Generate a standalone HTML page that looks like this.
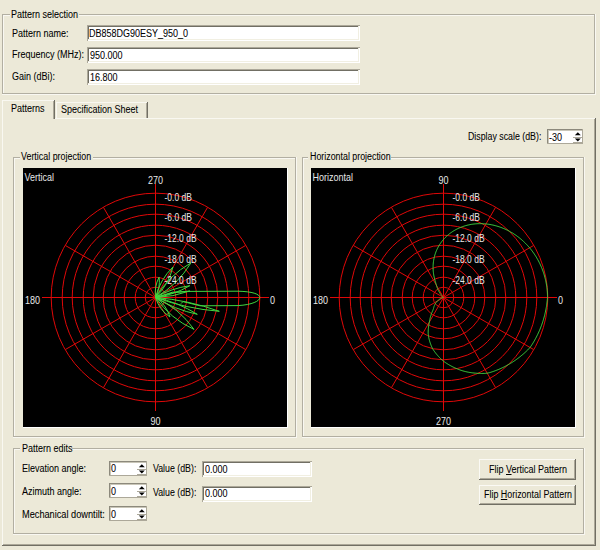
<!DOCTYPE html>
<html><head><meta charset="utf-8"><style>
html,body{margin:0;padding:0;}
body{width:600px;height:550px;overflow:hidden;background:#ECE9D8;position:relative;font-family:"Liberation Sans",sans-serif;}
body>div{position:absolute;}
.t{white-space:nowrap;line-height:11px;height:11px;transform:scaleX(0.9);transform-origin:0 0;-webkit-text-stroke:0.06px #000;}
u{text-decoration:underline;text-underline-offset:1px;}
svg text{font-family:"Liberation Sans",sans-serif;}
</style></head><body>
<div style="left:2px;top:14px;width:592px;height:1px;background:#B2AFA2"></div>
<div style="left:3px;top:15px;width:591px;height:1px;background:#F9F8F2"></div>
<div style="left:2px;top:14px;width:1px;height:79px;background:#B2AFA2"></div>
<div style="left:3px;top:15px;width:1px;height:78px;background:#F9F8F2"></div>
<div style="left:594px;top:14px;width:1px;height:80px;background:#B2AFA2"></div>
<div style="left:595px;top:14px;width:1px;height:81px;background:#F9F8F2"></div>
<div style="left:2px;top:93px;width:593px;height:1px;background:#B2AFA2"></div>
<div style="left:2px;top:94px;width:594px;height:1px;background:#F9F8F2"></div>
<div style="left:9.5px;top:13px;width:69px;height:3px;background:#ECE9D8"></div>
<div class="t" style="left:11.0px;top:8.7px;color:#000;font-size:10px;">Pattern selection</div>
<div class="t" style="left:11.5px;top:27.5px;color:#000;font-size:10px;">Pattern name:</div>
<div class="t" style="left:11.5px;top:49.0px;color:#000;font-size:10px;">Frequency (MHz):</div>
<div class="t" style="left:11.5px;top:71.0px;color:#000;font-size:10px;">Gain (dBi):</div>
<div style="left:87px;top:25px;width:273px;height:16px;background:#fff"></div>
<div style="left:87px;top:25px;width:273px;height:1px;background:#ACA899"></div>
<div style="left:87px;top:25px;width:1px;height:16px;background:#ACA899"></div>
<div style="left:88px;top:26px;width:271px;height:1px;background:#716F64"></div>
<div style="left:88px;top:26px;width:1px;height:14px;background:#716F64"></div>
<div style="left:88px;top:39px;width:271px;height:1px;background:#F1EFE2"></div>
<div style="left:358px;top:26px;width:1px;height:14px;background:#F1EFE2"></div>
<div class="t" style="left:89.0px;top:28.0px;color:#000;font-size:10px;">DB858DG90ESY_950_0</div>
<div style="left:87px;top:47px;width:273px;height:16px;background:#fff"></div>
<div style="left:87px;top:47px;width:273px;height:1px;background:#ACA899"></div>
<div style="left:87px;top:47px;width:1px;height:16px;background:#ACA899"></div>
<div style="left:88px;top:48px;width:271px;height:1px;background:#716F64"></div>
<div style="left:88px;top:48px;width:1px;height:14px;background:#716F64"></div>
<div style="left:88px;top:61px;width:271px;height:1px;background:#F1EFE2"></div>
<div style="left:358px;top:48px;width:1px;height:14px;background:#F1EFE2"></div>
<div class="t" style="left:89.5px;top:50.0px;color:#000;font-size:10px;">950.000</div>
<div style="left:87px;top:69px;width:273px;height:16px;background:#fff"></div>
<div style="left:87px;top:69px;width:273px;height:1px;background:#ACA899"></div>
<div style="left:87px;top:69px;width:1px;height:16px;background:#ACA899"></div>
<div style="left:88px;top:70px;width:271px;height:1px;background:#716F64"></div>
<div style="left:88px;top:70px;width:1px;height:14px;background:#716F64"></div>
<div style="left:88px;top:83px;width:271px;height:1px;background:#F1EFE2"></div>
<div style="left:358px;top:70px;width:1px;height:14px;background:#F1EFE2"></div>
<div class="t" style="left:89.5px;top:72.0px;color:#000;font-size:10px;">16.800</div>
<div style="left:2px;top:118px;width:594px;height:1px;background:#F9F8F1"></div>
<div style="left:2px;top:118px;width:1px;height:428px;background:#F9F8F1"></div>
<div style="left:594px;top:119px;width:1px;height:426px;background:#ACA899"></div>
<div style="left:595px;top:118px;width:1px;height:428px;background:#716F64"></div>
<div style="left:3px;top:544px;width:592px;height:1px;background:#ACA899"></div>
<div style="left:2px;top:545px;width:594px;height:1px;background:#716F64"></div>
<div style="left:56px;top:102px;width:1px;height:16px;background:#F9F8F1"></div>
<div style="left:56px;top:102px;width:91px;height:1px;background:#F9F8F1"></div>
<div style="left:146px;top:103px;width:1px;height:15px;background:#ACA899"></div>
<div style="left:147px;top:102px;width:1px;height:16px;background:#716F64"></div>
<div class="t" style="left:60.5px;top:103.5px;color:#000;font-size:10px;">Specification Sheet</div>
<div style="left:2px;top:100px;width:53px;height:20px;background:#ECE9D8"></div>
<div style="left:2px;top:100px;width:52px;height:1px;background:#F9F8F1"></div>
<div style="left:2px;top:100px;width:1px;height:22px;background:#F9F8F1"></div>
<div style="left:53px;top:101px;width:1px;height:18px;background:#ACA899"></div>
<div style="left:54px;top:100px;width:1px;height:19px;background:#716F64"></div>
<div class="t" style="left:10.5px;top:102.5px;color:#000;font-size:10px;">Patterns</div>
<div class="t" style="left:468.0px;top:131.0px;color:#000;font-size:10px;transform:scaleX(0.88);">Display scale (dB):</div>
<div style="left:547px;top:129px;width:36px;height:15px;background:#fff"></div>
<div style="left:547px;top:129px;width:36px;height:1px;background:#8C897C"></div>
<div style="left:547px;top:129px;width:1px;height:15px;background:#8C897C"></div>
<div style="left:548px;top:130px;width:34px;height:1px;background:#C9C6B8"></div>
<div style="left:548px;top:130px;width:1px;height:13px;background:#C9C6B8"></div>
<div style="left:582px;top:129px;width:1px;height:15px;background:#ACA899"></div>
<div style="left:547px;top:143px;width:36px;height:1px;background:#ACA899"></div>
<div class="t" style="left:549.0px;top:131.5px;color:#000;font-size:10px;">-30</div>
<div style="left:573px;top:137px;width:9px;height:1px;background:#ACA899"></div>
<div style="left:573px;top:142px;width:9px;height:1px;background:#ACA899"></div>
<svg style="position:absolute;left:573px;top:129px" width="10" height="15"><path d="M1.80 6.3 L7.80 6.3 L4.80 3.3 Z" fill="#000"/><path d="M1.80 9.6 L7.80 9.6 L4.80 12.6 Z" fill="#000"/></svg>
<div style="left:13px;top:157px;width:282px;height:1px;background:#B2AFA2"></div>
<div style="left:14px;top:158px;width:281px;height:1px;background:#F9F8F2"></div>
<div style="left:13px;top:157px;width:1px;height:279px;background:#B2AFA2"></div>
<div style="left:14px;top:158px;width:1px;height:278px;background:#F9F8F2"></div>
<div style="left:295px;top:157px;width:1px;height:280px;background:#B2AFA2"></div>
<div style="left:296px;top:157px;width:1px;height:281px;background:#F9F8F2"></div>
<div style="left:13px;top:436px;width:283px;height:1px;background:#B2AFA2"></div>
<div style="left:13px;top:437px;width:284px;height:1px;background:#F9F8F2"></div>
<div style="left:19.5px;top:156px;width:73px;height:3px;background:#ECE9D8"></div>
<div class="t" style="left:21.0px;top:150.8px;color:#000;font-size:10px;transform:scaleX(0.89);">Vertical projection</div>
<div style="left:302px;top:157px;width:281px;height:1px;background:#B2AFA2"></div>
<div style="left:303px;top:158px;width:280px;height:1px;background:#F9F8F2"></div>
<div style="left:302px;top:157px;width:1px;height:279px;background:#B2AFA2"></div>
<div style="left:303px;top:158px;width:1px;height:278px;background:#F9F8F2"></div>
<div style="left:583px;top:157px;width:1px;height:280px;background:#B2AFA2"></div>
<div style="left:584px;top:157px;width:1px;height:281px;background:#F9F8F2"></div>
<div style="left:302px;top:436px;width:282px;height:1px;background:#B2AFA2"></div>
<div style="left:302px;top:437px;width:283px;height:1px;background:#F9F8F2"></div>
<div style="left:308px;top:156px;width:83px;height:3px;background:#ECE9D8"></div>
<div class="t" style="left:309.5px;top:150.8px;color:#000;font-size:10px;transform:scaleX(0.885);">Horizontal projection</div>
<svg style="position:absolute;left:23px;top:168px" width="264" height="259"><rect x="0" y="0" width="264" height="259" fill="#000"/><g stroke="#E00808" stroke-width="1" fill="none"><circle cx="132.5" cy="129.5" r="10.30"/><circle cx="132.5" cy="129.5" r="20.30"/><circle cx="132.5" cy="129.5" r="31.30"/><circle cx="132.5" cy="129.5" r="41.30"/><circle cx="132.5" cy="129.5" r="52.30"/><circle cx="132.5" cy="129.5" r="62.30"/><circle cx="132.5" cy="129.5" r="72.30"/><circle cx="132.5" cy="129.5" r="83.30"/><circle cx="132.5" cy="129.5" r="93.30"/><circle cx="132.5" cy="129.5" r="104.30"/><line x1="132.5" y1="129.5" x2="246.00" y2="129.50"/><line x1="132.5" y1="129.5" x2="222.57" y2="77.50"/><line x1="132.5" y1="129.5" x2="184.50" y2="39.43"/><line x1="132.5" y1="129.5" x2="132.50" y2="16.00"/><line x1="132.5" y1="129.5" x2="80.50" y2="39.43"/><line x1="132.5" y1="129.5" x2="42.43" y2="77.50"/><line x1="132.5" y1="129.5" x2="19.00" y2="129.50"/><line x1="132.5" y1="129.5" x2="42.43" y2="181.50"/><line x1="132.5" y1="129.5" x2="80.50" y2="219.57"/><line x1="132.5" y1="129.5" x2="132.50" y2="243.00"/><line x1="132.5" y1="129.5" x2="184.50" y2="219.57"/><line x1="132.5" y1="129.5" x2="222.57" y2="181.50"/></g><path d="M132.50 129.50 Q154.72 116.73 168.00 94.80 Q145.78 107.57 132.50 129.50 M132.50 129.50 Q145.59 116.68 150.00 98.90 Q136.91 111.72 132.50 129.50 M132.50 129.50 Q137.45 119.86 136.10 109.10 Q131.15 118.74 132.50 129.50 M132.50 129.50 Q150.82 127.00 166.80 117.70 Q148.48 120.20 132.50 129.50 M132.50 129.50 Q150.17 129.00 166.80 123.00 Q149.13 123.50 132.50 129.50 M132.50 129.50 Q163.47 140.70 196.30 143.30 Q165.33 132.10 132.50 129.50 M132.50 129.50 Q151.91 141.61 174.30 146.30 Q154.89 134.19 132.50 129.50 M132.50 129.50 Q147.41 150.69 171.00 161.40 Q156.09 140.21 132.50 129.50 M132.50 129.50 Q136.22 141.88 147.00 149.00 Q143.28 136.62 132.50 129.50 M132.50 129.50 L149.50 124.20 L167.00 123.40 L215.00 123.20 C229.00 123.50 236.80 126.00 236.80 129.60 C236.80 133.00 229.00 136.80 215.00 137.60 L177.00 137.80 L160.00 133.60 L158.00 135.60" stroke="#40D840" stroke-width="1" fill="none"/><text transform="translate(1.50 13.00) scale(0.9 1)" text-anchor="start" style="font-size:10px;fill:#E8E8E8">Vertical</text><text transform="translate(132.50 16.00) scale(0.9 1)" text-anchor="middle" style="font-size:10px;fill:#E8E8E8">270</text><text transform="translate(132.50 256.50) scale(0.9 1)" text-anchor="middle" style="font-size:10px;fill:#E8E8E8">90</text><text transform="translate(17.00 135.50) scale(0.9 1)" text-anchor="end" style="font-size:10px;fill:#E8E8E8">180</text><text transform="translate(247.00 135.50) scale(0.9 1)" text-anchor="start" style="font-size:10px;fill:#E8E8E8">0</text><text transform="translate(141.50 32.50) scale(0.85 1)" text-anchor="start" style="font-size:10px;fill:#E8E8E8">-0.0 dB</text><text transform="translate(141.50 53.30) scale(0.85 1)" text-anchor="start" style="font-size:10px;fill:#E8E8E8">-6.0 dB</text><text transform="translate(141.50 74.10) scale(0.85 1)" text-anchor="start" style="font-size:10px;fill:#E8E8E8">-12.0 dB</text><text transform="translate(141.50 94.90) scale(0.85 1)" text-anchor="start" style="font-size:10px;fill:#E8E8E8">-18.0 dB</text><text transform="translate(141.50 115.70) scale(0.85 1)" text-anchor="start" style="font-size:10px;fill:#E8E8E8">-24.0 dB</text></svg>
<svg style="position:absolute;left:311px;top:168px" width="264" height="259"><rect x="0" y="0" width="264" height="259" fill="#000"/><g stroke="#E00808" stroke-width="1" fill="none"><circle cx="132.5" cy="129.5" r="10.30"/><circle cx="132.5" cy="129.5" r="20.30"/><circle cx="132.5" cy="129.5" r="31.30"/><circle cx="132.5" cy="129.5" r="41.30"/><circle cx="132.5" cy="129.5" r="52.30"/><circle cx="132.5" cy="129.5" r="62.30"/><circle cx="132.5" cy="129.5" r="72.30"/><circle cx="132.5" cy="129.5" r="83.30"/><circle cx="132.5" cy="129.5" r="93.30"/><circle cx="132.5" cy="129.5" r="104.30"/><line x1="132.5" y1="129.5" x2="246.00" y2="129.50"/><line x1="132.5" y1="129.5" x2="222.57" y2="77.50"/><line x1="132.5" y1="129.5" x2="184.50" y2="39.43"/><line x1="132.5" y1="129.5" x2="132.50" y2="16.00"/><line x1="132.5" y1="129.5" x2="80.50" y2="39.43"/><line x1="132.5" y1="129.5" x2="42.43" y2="77.50"/><line x1="132.5" y1="129.5" x2="19.00" y2="129.50"/><line x1="132.5" y1="129.5" x2="42.43" y2="181.50"/><line x1="132.5" y1="129.5" x2="80.50" y2="219.57"/><line x1="132.5" y1="129.5" x2="132.50" y2="243.00"/><line x1="132.5" y1="129.5" x2="184.50" y2="219.57"/><line x1="132.5" y1="129.5" x2="222.57" y2="181.50"/></g><path d="M132.50 129.50 L132.50 129.50 L132.50 129.50 L132.50 129.50 L132.50 129.50 L132.50 129.50 L132.50 129.50 L132.50 129.50 L132.50 129.50 L132.50 129.50 L132.50 129.50 L132.50 129.50 L132.50 129.50 L132.50 129.50 L132.50 129.50 L132.50 129.50 L132.50 129.50 L132.50 129.50 L132.48 129.50 L132.43 129.51 L132.36 129.52 L132.26 129.54 L132.15 129.57 L132.01 129.60 L131.84 129.64 L131.68 129.68 L131.52 129.73 L131.36 129.77 L131.20 129.82 L131.04 129.88 L130.88 129.93 L130.72 129.99 L130.57 130.05 L130.41 130.12 L130.26 130.19 L130.10 130.26 L129.95 130.33 L129.80 130.40 L129.65 130.48 L129.50 130.56 L129.35 130.65 L129.20 130.73 L129.06 130.82 L128.91 130.91 L128.77 131.01 L128.63 131.10 L128.49 131.20 L128.35 131.30 L128.21 131.41 L128.08 131.52 L127.94 131.63 L127.81 131.74 L127.67 131.86 L127.53 131.98 L127.38 132.11 L127.23 132.24 L127.07 132.39 L126.91 132.54 L126.74 132.69 L126.58 132.85 L126.41 133.01 L126.25 133.18 L126.10 133.35 L125.94 133.52 L125.79 133.69 L125.64 133.87 L125.49 134.05 L125.35 134.23 L125.21 134.42 L125.07 134.61 L124.93 134.80 L124.80 134.99 L124.67 135.19 L124.54 135.39 L124.41 135.59 L124.29 135.80 L124.17 136.01 L124.06 136.22 L123.94 136.43 L123.83 136.64 L123.73 136.86 L123.62 137.08 L123.52 137.30 L123.43 137.53 L123.33 137.76 L123.24 137.98 L123.15 138.22 L123.07 138.45 L122.99 138.68 L122.91 138.92 L122.84 139.16 L122.77 139.40 L122.70 139.65 L122.64 139.89 L122.58 140.14 L122.52 140.39 L122.47 140.64 L122.39 140.93 L122.28 141.25 L122.15 141.62 L121.98 142.03 L121.79 142.49 L121.57 142.99 L121.33 143.54 L121.09 144.10 L120.86 144.67 L120.64 145.24 L120.42 145.82 L120.22 146.40 L120.03 146.99 L119.84 147.58 L119.66 148.18 L119.50 148.78 L119.34 149.38 L119.19 149.99 L119.06 150.60 L118.93 151.22 L118.80 151.86 L118.66 152.53 L118.52 153.23 L118.38 153.96 L118.23 154.72 L118.09 155.50 L117.94 156.32 L117.80 157.15 L117.67 157.98 L117.56 158.82 L117.46 159.66 L117.38 160.50 L117.31 161.35 L117.25 162.20 L117.21 163.06 L117.18 163.91 L117.18 164.74 L117.20 165.55 L117.25 166.33 L117.32 167.08 L117.41 167.81 L117.52 168.51 L117.66 169.19 L117.80 169.87 L117.96 170.56 L118.13 171.24 L118.31 171.92 L118.49 172.61 L118.69 173.29 L118.90 173.97 L119.12 174.65 L119.36 175.34 L119.60 176.02 L119.85 176.70 L120.12 177.38 L120.39 178.06 L120.68 178.73 L120.98 179.39 L121.30 180.03 L121.63 180.66 L121.97 181.26 L122.33 181.84 L122.69 182.41 L123.07 182.96 L123.46 183.50 L123.86 184.05 L124.27 184.58 L124.68 185.12 L125.11 185.65 L125.54 186.18 L125.98 186.71 L126.43 187.23 L126.89 187.75 L127.36 188.27 L127.83 188.78 L128.32 189.29 L128.81 189.79 L129.31 190.29 L129.82 190.79 L130.34 191.28 L130.87 191.77 L131.40 192.24 L131.95 192.70 L132.50 193.15 L133.06 193.59 L133.63 194.01 L134.20 194.42 L134.78 194.81 L135.37 195.20 L135.96 195.58 L136.57 195.96 L137.17 196.34 L137.79 196.70 L138.41 197.07 L139.04 197.42 L139.68 197.77 L140.32 198.12 L140.97 198.46 L141.62 198.79 L142.28 199.12 L142.95 199.44 L143.63 199.75 L144.31 200.06 L144.99 200.36 L145.69 200.65 L146.39 200.94 L147.09 201.22 L147.80 201.49 L148.52 201.76 L149.24 202.02 L149.97 202.27 L150.70 202.51 L151.44 202.75 L152.19 202.98 L152.94 203.19 L153.69 203.39 L154.44 203.58 L155.20 203.76 L155.97 203.92 L156.73 204.08 L157.50 204.22 L158.28 204.36 L159.05 204.49 L159.84 204.61 L160.62 204.72 L161.42 204.83 L162.21 204.92 L163.01 205.01 L163.81 205.09 L164.62 205.17 L165.43 205.23 L166.24 205.29 L167.06 205.33 L167.88 205.37 L168.70 205.40 L169.53 205.42 L170.36 205.44 L171.19 205.44 L172.03 205.43 L172.87 205.42 L173.71 205.40 L174.54 205.35 L175.36 205.26 L176.18 205.15 L176.98 205.01 L177.77 204.84 L178.55 204.64 L179.31 204.41 L180.07 204.18 L180.84 203.93 L181.60 203.68 L182.36 203.42 L183.12 203.16 L183.88 202.88 L184.64 202.60 L185.40 202.31 L186.16 202.01 L186.91 201.71 L187.67 201.40 L188.42 201.08 L189.17 200.75 L189.93 200.41 L190.67 200.07 L191.42 199.72 L192.17 199.36 L192.91 199.00 L193.65 198.62 L194.39 198.24 L195.13 197.85 L195.87 197.45 L196.60 197.05 L197.33 196.64 L198.06 196.22 L198.79 195.79 L199.52 195.36 L200.24 194.91 L200.96 194.46 L201.67 194.01 L202.39 193.54 L203.10 193.07 L203.81 192.59 L204.51 192.10 L205.21 191.60 L205.91 191.10 L206.61 190.59 L207.30 190.07 L207.99 189.55 L208.67 189.01 L209.36 188.47 L210.03 187.93 L210.71 187.37 L211.38 186.81 L212.05 186.24 L212.71 185.66 L213.37 185.08 L214.02 184.49 L214.67 183.89 L215.32 183.28 L215.96 182.67 L216.60 182.05 L217.23 181.42 L217.84 180.78 L218.43 180.12 L219.00 179.44 L219.54 178.75 L220.06 178.04 L220.56 177.31 L221.03 176.57 L221.50 175.83 L221.96 175.08 L222.41 174.33 L222.86 173.57 L223.30 172.81 L223.73 172.04 L224.16 171.27 L224.59 170.50 L225.00 169.72 L225.41 168.94 L225.81 168.15 L226.21 167.36 L226.60 166.57 L226.98 165.77 L227.35 164.96 L227.72 164.16 L228.08 163.35 L228.44 162.53 L228.79 161.72 L229.13 160.90 L229.46 160.07 L229.79 159.24 L230.11 158.41 L230.42 157.58 L230.73 156.74 L231.02 155.90 L231.32 155.06 L231.60 154.21 L231.88 153.36 L232.15 152.50 L232.41 151.65 L232.66 150.79 L232.91 149.93 L233.15 149.06 L233.38 148.20 L233.61 147.33 L233.82 146.46 L234.03 145.58 L234.24 144.70 L234.43 143.83 L234.62 142.94 L234.80 142.06 L234.97 141.18 L235.13 140.29 L235.29 139.40 L235.44 138.51 L235.58 137.61 L235.71 136.72 L235.84 135.82 L235.96 134.92 L236.07 134.02 L236.17 133.12 L236.26 132.22 L236.35 131.31 L236.43 130.41 L236.50 129.50 L236.49 128.59 L236.48 127.69 L236.45 126.78 L236.42 125.87 L236.37 124.96 L236.31 124.06 L236.24 123.15 L236.17 122.25 L236.08 121.35 L235.98 120.45 L235.87 119.55 L235.75 118.65 L235.62 117.75 L235.48 116.86 L235.33 115.96 L235.17 115.07 L235.00 114.18 L234.82 113.29 L234.62 112.41 L234.42 111.53 L234.21 110.65 L233.99 109.77 L233.76 108.90 L233.52 108.03 L233.26 107.16 L233.00 106.30 L232.73 105.44 L232.45 104.58 L232.16 103.73 L231.86 102.88 L231.55 102.03 L231.23 101.19 L230.90 100.35 L230.56 99.52 L230.21 98.69 L229.85 97.87 L229.48 97.05 L229.10 96.24 L228.72 95.43 L228.32 94.63 L227.91 93.83 L227.50 93.03 L227.08 92.25 L226.64 91.46 L226.20 90.69 L225.75 89.92 L225.30 89.15 L224.83 88.39 L224.35 87.64 L223.87 86.89 L223.38 86.15 L222.88 85.42 L222.37 84.69 L221.85 83.97 L221.33 83.26 L220.79 82.55 L220.25 81.85 L219.70 81.16 L219.15 80.48 L218.58 79.80 L218.01 79.13 L217.43 78.47 L216.85 77.81 L216.25 77.17 L215.65 76.53 L215.04 75.89 L214.43 75.27 L213.81 74.66 L213.18 74.05 L212.54 73.45 L211.90 72.86 L211.25 72.28 L210.60 71.71 L209.94 71.15 L209.27 70.59 L208.60 70.04 L207.92 69.51 L207.24 68.98 L206.55 68.46 L205.85 67.95 L205.15 67.45 L204.44 66.96 L203.73 66.48 L203.02 66.01 L202.29 65.55 L201.57 65.09 L200.84 64.65 L200.10 64.22 L199.36 63.80 L198.62 63.38 L197.87 62.98 L197.12 62.59 L196.36 62.21 L195.60 61.83 L194.84 61.47 L194.07 61.12 L193.30 60.78 L192.52 60.45 L191.75 60.13 L190.97 59.82 L190.19 59.52 L189.40 59.23 L188.61 58.96 L187.82 58.69 L187.03 58.44 L186.23 58.19 L185.44 57.96 L184.64 57.74 L183.84 57.53 L183.04 57.33 L182.23 57.14 L181.43 56.96 L180.62 56.79 L179.82 56.64 L179.01 56.49 L178.20 56.36 L177.39 56.24 L176.59 56.13 L175.78 56.03 L174.97 55.94 L174.16 55.87 L173.35 55.80 L172.54 55.75 L171.74 55.71 L170.93 55.68 L170.12 55.66 L169.32 55.65 L168.52 55.66 L167.71 55.67 L166.91 55.70 L166.11 55.74 L165.32 55.79 L164.52 55.85 L163.73 55.93 L162.94 56.01 L162.15 56.11 L161.37 56.22 L160.58 56.34 L159.80 56.47 L159.03 56.61 L158.26 56.77 L157.49 56.94 L156.72 57.11 L155.96 57.30 L155.20 57.50 L154.45 57.71 L153.70 57.94 L152.95 58.17 L152.21 58.42 L151.48 58.68 L150.75 58.94 L150.02 59.22 L149.30 59.52 L148.59 59.82 L147.88 60.13 L147.18 60.45 L146.48 60.79 L145.79 61.14 L145.10 61.49 L144.43 61.86 L143.76 62.24 L143.09 62.63 L142.43 63.03 L141.78 63.44 L141.14 63.87 L140.51 64.30 L139.88 64.74 L139.26 65.19 L138.65 65.66 L138.04 66.13 L137.45 66.62 L136.86 67.11 L136.28 67.62 L135.72 68.13 L135.16 68.66 L134.61 69.19 L134.06 69.74 L133.53 70.29 L133.01 70.85 L132.50 71.43 L132.00 72.01 L131.51 72.60 L131.03 73.20 L130.56 73.81 L130.10 74.43 L129.65 75.06 L129.21 75.70 L128.78 76.35 L128.37 77.00 L127.97 77.67 L127.57 78.34 L127.19 79.02 L126.83 79.71 L126.47 80.41 L126.13 81.11 L125.80 81.82 L125.48 82.55 L125.18 83.27 L124.89 84.01 L124.61 84.75 L124.35 85.51 L124.10 86.26 L123.86 87.03 L123.64 87.80 L123.43 88.58 L123.23 89.37 L123.06 90.16 L122.89 90.96 L122.74 91.76 L122.61 92.57 L122.49 93.39 L122.38 94.21 L122.29 95.04 L122.22 95.88 L122.16 96.72 L122.12 97.56 L122.10 98.41 L122.09 99.27 L122.10 100.13 L122.12 100.99 L122.17 101.86 L122.22 102.73 L122.30 103.61 L122.40 104.49 L122.51 105.38 L122.64 106.26 L122.78 107.16 L122.95 108.05 L123.13 108.95 L123.34 109.85 L123.56 110.75 L123.80 111.66 L124.06 112.58 L124.32 113.44 L124.55 114.23 L124.77 114.96 L124.96 115.62 L125.13 116.21 L125.28 116.74 L125.39 117.19 L125.51 117.64 L125.64 118.08 L125.77 118.52 L125.91 118.96 L126.06 119.39 L126.22 119.82 L126.38 120.25 L126.55 120.67 L126.72 121.09 L126.91 121.51 L127.09 121.92 L127.29 122.33 L127.49 122.74 L127.70 123.14 L127.92 123.53 L128.14 123.92 L128.37 124.31 L128.61 124.69 L128.85 125.07 L129.08 125.42 L129.28 125.73 L129.47 126.02 L129.65 126.28 L129.80 126.50 L129.93 126.70 L130.04 126.87 L130.16 127.03 L130.28 127.20 L130.40 127.36 L130.52 127.52 L130.65 127.68 L130.77 127.83 L130.90 127.99 L131.04 128.14 L131.17 128.28 L131.31 128.43 L131.45 128.57 L131.59 128.71 L131.74 128.85 L131.89 128.99 L132.04 129.12 L132.17 129.23 L132.28 129.32 L132.36 129.39 L132.43 129.45 L132.48 129.48 L132.50 129.50 L132.50 129.50 L132.50 129.50 L132.50 129.50 L132.50 129.50 L132.50 129.50 L132.50 129.50 L132.50 129.50 L132.50 129.50 L132.50 129.50 L132.50 129.50 L132.50 129.50 L132.50 129.50 L132.50 129.50 L132.50 129.50 L132.50 129.50 L132.50 129.50 L132.50 129.50 L132.50 129.50 L132.50 129.50 L132.50 129.50 L132.50 129.50 L132.50 129.50 L132.50 129.50 L132.50 129.50 L132.50 129.50 L132.50 129.50 L132.50 129.50 L132.50 129.50 L132.50 129.50 L132.50 129.50 L132.50 129.50 L132.50 129.50 L132.50 129.50 L132.50 129.50 L132.50 129.50 L132.50 129.50 L132.50 129.50 L132.50 129.50 L132.50 129.50 L132.50 129.50 L132.50 129.50 L132.50 129.50 L132.50 129.50 L132.50 129.50 L132.50 129.50 L132.50 129.50 L132.50 129.50 L132.50 129.50 L132.50 129.50 L132.50 129.50 L132.50 129.50 L132.50 129.50 L132.50 129.50 L132.50 129.50 L132.50 129.50 L132.50 129.50 L132.50 129.50 L132.50 129.50 L132.50 129.50 L132.50 129.50 L132.50 129.50 L132.50 129.50 L132.50 129.50 L132.50 129.50 L132.50 129.50 L132.50 129.50 L132.50 129.50 L132.50 129.50 L132.50 129.50 L132.50 129.50 L132.50 129.50 L132.50 129.50 L132.50 129.50" stroke="#40D840" stroke-width="1" fill="none"/><text transform="translate(1.50 13.00) scale(0.9 1)" text-anchor="start" style="font-size:10px;fill:#E8E8E8">Horizontal</text><text transform="translate(132.50 16.00) scale(0.9 1)" text-anchor="middle" style="font-size:10px;fill:#E8E8E8">90</text><text transform="translate(132.50 256.50) scale(0.9 1)" text-anchor="middle" style="font-size:10px;fill:#E8E8E8">270</text><text transform="translate(17.00 135.50) scale(0.9 1)" text-anchor="end" style="font-size:10px;fill:#E8E8E8">180</text><text transform="translate(247.00 135.50) scale(0.9 1)" text-anchor="start" style="font-size:10px;fill:#E8E8E8">0</text><text transform="translate(141.50 32.50) scale(0.85 1)" text-anchor="start" style="font-size:10px;fill:#E8E8E8">-0.0 dB</text><text transform="translate(141.50 53.30) scale(0.85 1)" text-anchor="start" style="font-size:10px;fill:#E8E8E8">-6.0 dB</text><text transform="translate(141.50 74.10) scale(0.85 1)" text-anchor="start" style="font-size:10px;fill:#E8E8E8">-12.0 dB</text><text transform="translate(141.50 94.90) scale(0.85 1)" text-anchor="start" style="font-size:10px;fill:#E8E8E8">-18.0 dB</text><text transform="translate(141.50 115.70) scale(0.85 1)" text-anchor="start" style="font-size:10px;fill:#E8E8E8">-24.0 dB</text></svg>
<div style="left:287px;top:168px;width:1px;height:260px;background:#fff"></div>
<div style="left:23px;top:427px;width:265px;height:1px;background:#fff"></div>
<div style="left:575px;top:168px;width:1px;height:260px;background:#fff"></div>
<div style="left:311px;top:427px;width:265px;height:1px;background:#fff"></div>
<div style="left:13px;top:448px;width:570px;height:1px;background:#B2AFA2"></div>
<div style="left:14px;top:449px;width:569px;height:1px;background:#F9F8F2"></div>
<div style="left:13px;top:448px;width:1px;height:85px;background:#B2AFA2"></div>
<div style="left:14px;top:449px;width:1px;height:84px;background:#F9F8F2"></div>
<div style="left:583px;top:448px;width:1px;height:86px;background:#B2AFA2"></div>
<div style="left:584px;top:448px;width:1px;height:87px;background:#F9F8F2"></div>
<div style="left:13px;top:533px;width:571px;height:1px;background:#B2AFA2"></div>
<div style="left:13px;top:534px;width:572px;height:1px;background:#F9F8F2"></div>
<div style="left:20px;top:447px;width:52px;height:3px;background:#ECE9D8"></div>
<div class="t" style="left:21.5px;top:443.0px;color:#000;font-size:10px;">Pattern edits</div>
<div class="t" style="left:22.0px;top:462.5px;color:#000;font-size:10px;">Elevation angle:</div>
<div class="t" style="left:22.0px;top:485.7px;color:#000;font-size:10px;">Azimuth angle:</div>
<div class="t" style="left:22.0px;top:508.70000000000005px;color:#000;font-size:10px;transform:scaleX(0.92);">Mechanical downtilt:</div>
<div style="left:109px;top:461px;width:38px;height:15px;background:#fff"></div>
<div style="left:109px;top:461px;width:38px;height:1px;background:#8C897C"></div>
<div style="left:109px;top:461px;width:1px;height:15px;background:#8C897C"></div>
<div style="left:110px;top:462px;width:36px;height:1px;background:#C9C6B8"></div>
<div style="left:110px;top:462px;width:1px;height:13px;background:#C9C6B8"></div>
<div style="left:146px;top:461px;width:1px;height:15px;background:#ACA899"></div>
<div style="left:109px;top:475px;width:38px;height:1px;background:#ACA899"></div>
<div class="t" style="left:111.0px;top:463.3px;color:#000;font-size:10px;">0</div>
<div style="left:137px;top:469px;width:9px;height:1px;background:#ACA899"></div>
<div style="left:137px;top:474px;width:9px;height:1px;background:#ACA899"></div>
<svg style="position:absolute;left:137px;top:461px" width="10" height="15"><path d="M1.80 6.3 L7.80 6.3 L4.80 3.3 Z" fill="#000"/><path d="M1.80 9.6 L7.80 9.6 L4.80 12.6 Z" fill="#000"/></svg>
<div style="left:109px;top:483px;width:38px;height:15px;background:#fff"></div>
<div style="left:109px;top:483px;width:38px;height:1px;background:#8C897C"></div>
<div style="left:109px;top:483px;width:1px;height:15px;background:#8C897C"></div>
<div style="left:110px;top:484px;width:36px;height:1px;background:#C9C6B8"></div>
<div style="left:110px;top:484px;width:1px;height:13px;background:#C9C6B8"></div>
<div style="left:146px;top:483px;width:1px;height:15px;background:#ACA899"></div>
<div style="left:109px;top:497px;width:38px;height:1px;background:#ACA899"></div>
<div class="t" style="left:111.0px;top:486.0px;color:#000;font-size:10px;">0</div>
<div style="left:137px;top:491px;width:9px;height:1px;background:#ACA899"></div>
<div style="left:137px;top:496px;width:9px;height:1px;background:#ACA899"></div>
<svg style="position:absolute;left:137px;top:483px" width="10" height="15"><path d="M1.80 6.3 L7.80 6.3 L4.80 3.3 Z" fill="#000"/><path d="M1.80 9.6 L7.80 9.6 L4.80 12.6 Z" fill="#000"/></svg>
<div style="left:109px;top:506px;width:38px;height:15px;background:#fff"></div>
<div style="left:109px;top:506px;width:38px;height:1px;background:#8C897C"></div>
<div style="left:109px;top:506px;width:1px;height:15px;background:#8C897C"></div>
<div style="left:110px;top:507px;width:36px;height:1px;background:#C9C6B8"></div>
<div style="left:110px;top:507px;width:1px;height:13px;background:#C9C6B8"></div>
<div style="left:146px;top:506px;width:1px;height:15px;background:#ACA899"></div>
<div style="left:109px;top:520px;width:38px;height:1px;background:#ACA899"></div>
<div class="t" style="left:111.0px;top:509.0px;color:#000;font-size:10px;">0</div>
<div style="left:137px;top:514px;width:9px;height:1px;background:#ACA899"></div>
<div style="left:137px;top:519px;width:9px;height:1px;background:#ACA899"></div>
<svg style="position:absolute;left:137px;top:506px" width="10" height="15"><path d="M1.80 6.3 L7.80 6.3 L4.80 3.3 Z" fill="#000"/><path d="M1.80 9.6 L7.80 9.6 L4.80 12.6 Z" fill="#000"/></svg>
<div class="t" style="left:153.0px;top:463.0px;color:#000;font-size:10px;transform:scaleX(0.88);">Value (dB):</div>
<div class="t" style="left:153.0px;top:487.0px;color:#000;font-size:10px;transform:scaleX(0.88);">Value (dB):</div>
<div style="left:202px;top:461px;width:110px;height:16px;background:#fff"></div>
<div style="left:202px;top:461px;width:110px;height:1px;background:#ACA899"></div>
<div style="left:202px;top:461px;width:1px;height:16px;background:#ACA899"></div>
<div style="left:203px;top:462px;width:108px;height:1px;background:#716F64"></div>
<div style="left:203px;top:462px;width:1px;height:14px;background:#716F64"></div>
<div style="left:203px;top:475px;width:108px;height:1px;background:#F1EFE2"></div>
<div style="left:310px;top:462px;width:1px;height:14px;background:#F1EFE2"></div>
<div class="t" style="left:204.5px;top:464.0px;color:#000;font-size:10px;">0.000</div>
<div style="left:202px;top:486px;width:110px;height:16px;background:#fff"></div>
<div style="left:202px;top:486px;width:110px;height:1px;background:#ACA899"></div>
<div style="left:202px;top:486px;width:1px;height:16px;background:#ACA899"></div>
<div style="left:203px;top:487px;width:108px;height:1px;background:#716F64"></div>
<div style="left:203px;top:487px;width:1px;height:14px;background:#716F64"></div>
<div style="left:203px;top:500px;width:108px;height:1px;background:#F1EFE2"></div>
<div style="left:310px;top:487px;width:1px;height:14px;background:#F1EFE2"></div>
<div class="t" style="left:204.5px;top:488.0px;color:#000;font-size:10px;">0.000</div>
<div style="left:479px;top:459px;width:97px;height:21px;background:#ECE9D8"></div>
<div style="left:479px;top:459px;width:97px;height:1px;background:#FBFAF5"></div>
<div style="left:479px;top:459px;width:1px;height:21px;background:#FBFAF5"></div>
<div style="left:479px;top:479px;width:97px;height:1px;background:#716F64"></div>
<div style="left:575px;top:459px;width:1px;height:21px;background:#716F64"></div>
<div style="left:480px;top:478px;width:95px;height:1px;background:#ACA899"></div>
<div style="left:574px;top:460px;width:1px;height:19px;background:#ACA899"></div>
<div class="t" style="left:489.0px;top:463.5px;color:#000;font-size:10px;">Flip <u>V</u>ertical Pattern</div>
<div style="left:479px;top:485px;width:97px;height:20px;background:#ECE9D8"></div>
<div style="left:479px;top:485px;width:97px;height:1px;background:#FBFAF5"></div>
<div style="left:479px;top:485px;width:1px;height:20px;background:#FBFAF5"></div>
<div style="left:479px;top:504px;width:97px;height:1px;background:#716F64"></div>
<div style="left:575px;top:485px;width:1px;height:20px;background:#716F64"></div>
<div style="left:480px;top:503px;width:95px;height:1px;background:#ACA899"></div>
<div style="left:574px;top:486px;width:1px;height:18px;background:#ACA899"></div>
<div class="t" style="left:484.0px;top:488.5px;color:#000;font-size:10px;transform:scaleX(0.89);">Flip <u>H</u>orizontal Pattern</div>
</body></html>
